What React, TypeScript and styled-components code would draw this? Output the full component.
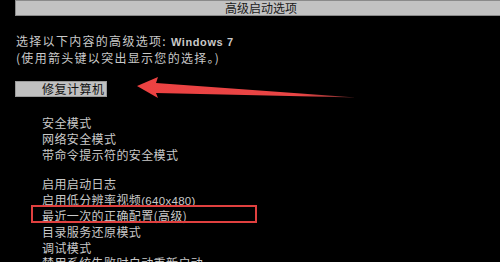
import styled, { createGlobalStyle } from "styled-components";

const GlobalStyle = createGlobalStyle`
  html, body {
    margin: 0;
    padding: 0;
    background: #000;
  }
  body {
    width: 500px;
    height: 262px;
    overflow: hidden;
    font-family: "Noto Sans CJK SC", "DejaVu Sans", sans-serif;
  }
`;

const Screen = styled.div`
  position: relative;
  width: 500px;
  height: 262px;
  overflow: hidden;
  background: #000;
  color: #c9c9c9;
  display: flex;
  flex-direction: column;
`;

const TitleBar = styled.div`
  margin-left: 15px;
  height: 14px;
  border-top: 1px solid #8a8a8a;
  border-bottom: 1px solid #8a8a8a;
  border-left: 1px solid #8a8a8a;
  background: #c2c2c2;
  color: #1a1a1a;
  font-size: 12px;
  line-height: 14px;
  text-align: center;
  padding-left: 6px;
`;

const Prompt = styled.div<{ $top?: number }>`
  margin-top: ${(p) => p.$top ?? 0}px;
  padding-left: 16px;
  font-size: 12px;
  line-height: 16px;
  letter-spacing: 1.3px;
  white-space: nowrap;
`;

const Latin = styled.span`
  font-family: "Liberation Sans", "DejaVu Sans", sans-serif;
  font-weight: bold;
  font-size: 11px;
  letter-spacing: 0.6px;
`;

const Selected = styled.div`
  margin-top: 15px;
  margin-left: 15px;
  align-self: flex-start;
  height: 14px;
  padding-left: 26px;
  padding-right: 1px;
  background: #c0c0c0;
  border: 1px solid #9a9a9a;
  color: #111;
  font-size: 12px;
  line-height: 14px;
  letter-spacing: 0.5px;
  white-space: nowrap;
`;

const Group = styled.div<{ $top: number }>`
  margin-top: ${(p) => p.$top}px;
  padding-left: 42px;
  display: flex;
  flex-direction: column;
`;

const Item = styled.div`
  position: relative;
  font-size: 12px;
  line-height: 15.8px;
  height: 15.8px;
  letter-spacing: 0.4px;
  white-space: nowrap;
`;

const Num = styled.span`
  font-family: "Liberation Sans", "DejaVu Sans", sans-serif;
  font-size: 11.5px;
  letter-spacing: 0.3px;
`;

const RedBox = styled.span`
  position: absolute;
  left: -11px;
  top: -3px;
  width: 226px;
  height: 18px;
  border: 2px solid #e0403f;
  box-sizing: border-box;
`;

const Arrow = styled.svg`
  position: absolute;
  left: 0;
  top: 0;
  pointer-events: none;
`;

const safeModes = ["安全模式", "网络安全模式", "带命令提示符的安全模式"];

export default function App() {
  return (
    <>
      <GlobalStyle />
      <Screen>
        <TitleBar>高级启动选项</TitleBar>
        <Prompt $top={17}>
          选择以下内容的高级选项: <Latin>Windows 7</Latin>
        </Prompt>
        <Prompt>(使用箭头键以突出显示您的选择。)</Prompt>
        <Selected>修复计算机</Selected>
        <Group $top={18}>
          {safeModes.map((m) => (
            <Item key={m}>{m}</Item>
          ))}
        </Group>
        <Group $top={14}>
          <Item>启用启动日志</Item>
          <Item>
            启用低分辨率视频<Num>(640x480)</Num>
          </Item>
          <Item>
            最近一次的正确配置(高级)
            <RedBox />
          </Item>
          <Item>目录服务还原模式</Item>
          <Item>调试模式</Item>
          <Item>禁用系统失败时自动重新启动</Item>
        </Group>
        <Arrow width="500" height="262" viewBox="0 0 500 262">
          <defs>
            <linearGradient id="tail" x1="137" y1="0" x2="356" y2="0" gradientUnits="userSpaceOnUse">
              <stop offset="0" stopColor="#ec4242" />
              <stop offset="0.75" stopColor="#e84545" />
              <stop offset="1" stopColor="#6a2a2a" />
            </linearGradient>
          </defs>
          <polygon
            points="137,86 158,77 156,83 356,97.5 156,93 158,98"
            fill="url(#tail)"
          />
        </Arrow>
      </Screen>
    </>
  );
}
